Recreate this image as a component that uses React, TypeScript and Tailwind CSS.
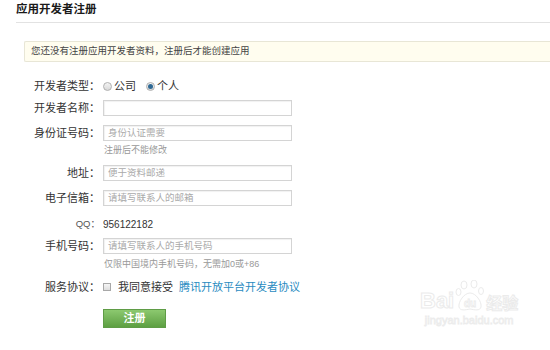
import React from 'react';

const font = { fontFamily: '"Liberation Sans", "Noto Sans CJK SC", sans-serif' };

function Label({ children }: { children: React.ReactNode }) {
  return <div className="w-[101px] shrink-0 text-right text-[11px] text-[#333] pr-[1px]">{children}</div>;
}

function Field({ placeholder }: { placeholder?: string }) {
  return (
    <div className="ml-[2px] flex h-4 w-[189px] items-center border border-[#d4d4d4] bg-white pl-[4px] shadow-[inset_1px_1px_1px_rgba(0,0,0,0.06)]">
      <span className="text-[9.5px] text-[#aaa]">{placeholder}</span>
    </div>
  );
}

function Radio({ checked }: { checked?: boolean }) {
  return (
    <span className="flex h-[9px] w-[9px] items-center justify-center rounded-full border border-[#b0b0b0] bg-gradient-to-b from-[#f4f4f4] to-[#d8d8d8]">
      {checked && <span className="h-[5px] w-[5px] rounded-full bg-[#2f6994]" />}
    </span>
  );
}

export default function App() {
  return (
    <div className="relative h-[350px] w-[550px] overflow-hidden bg-white" style={font}>
      {/* title */}
      <div className="ml-[16px] flex h-[23px] items-center border-b border-[#e2e2e2] pb-[3px]">
        <span className="text-[11.5px] font-bold text-[#1a1a1a]">应用开发者注册</span>
      </div>

      {/* notice */}
      <div className="ml-[24px] mt-[18px] flex h-[21px] items-center rounded-l-[2px] border border-r-0 border-[#e8e6d6] bg-[#fffdef] pl-[6px]">
        <span className="text-[9.5px] text-[#444]">您还没有注册应用开发者资料，注册后才能创建应用</span>
      </div>

      <div className="flex flex-col">
        <div className="mt-[16px] flex h-4 items-center">
          <Label>开发者类型：</Label>
          <div className="ml-[2px] flex items-center text-[11px] text-[#333]">
            <Radio />
            <span className="ml-[2px]">公司</span>
            <span className="ml-[10px]"><Radio checked /></span>
            <span className="ml-[2px]">个人</span>
          </div>
        </div>

        <div className="mt-[6px] flex h-4 items-center">
          <Label>开发者名称：</Label>
          <Field />
        </div>

        <div className="mt-[9px] flex h-4 items-center">
          <Label>身份证号码：</Label>
          <Field placeholder="身份认证需要" />
        </div>

        <div className="mt-[2px] flex h-4 items-center">
          <div className="w-[104px] shrink-0" />
          <span className="text-[9px] text-[#999]">注册后不能修改</span>
        </div>

        <div className="mt-[6px] flex h-4 items-center">
          <Label>地址：</Label>
          <Field placeholder="便于资料邮递" />
        </div>

        <div className="mt-[9px] flex h-4 items-center">
          <Label>电子信箱：</Label>
          <Field placeholder="请填写联系人的邮箱" />
        </div>

        <div className="mt-[10px] flex h-4 items-center">
          <div className="w-[101px] shrink-0 pr-[1px] text-right text-[9.5px] text-[#555]">QQ：</div>
          <span className="ml-[2px] text-[10px] text-[#333]">956122182</span>
        </div>

        <div className="mt-[6px] flex h-4 items-center">
          <Label>手机号码：</Label>
          <Field placeholder="请填写联系人的手机号码" />
        </div>

        <div className="mt-[3px] flex h-4 items-center">
          <div className="w-[104px] shrink-0" />
          <span className="text-[9px] text-[#999]">仅限中国境内手机号码，无需加0或+86</span>
        </div>

        <div className="mt-[6px] flex h-4 items-center">
          <Label>服务协议：</Label>
          <span className="ml-[2px] h-[8px] w-[8px] border border-[#a8a8a8] bg-gradient-to-b from-[#f6f6f6] to-[#dedede]" />
          <span className="ml-[7px] text-[11px] text-[#333]">我同意接受</span>
          <span className="ml-[6px] text-[11px] text-[#2a8bc1]">腾讯开放平台开发者协议</span>
        </div>

        <div className="mt-[14px] flex">
          <div className="w-[103px] shrink-0" />
          <button className="flex h-[19px] w-[63px] items-center justify-center border border-[#5f9c46] bg-gradient-to-b from-[#8cc96f] to-[#5d9f42] text-[11px] font-bold text-white">
            注册
          </button>
        </div>
      </div>

      {/* watermark */}
      <div className="pointer-events-none absolute left-[420px] top-[280px] flex flex-col items-center">
        <div className="flex items-end">
          <span className="text-[22px] font-bold leading-none text-white [-webkit-text-stroke:1px_#ebebeb]">Bai</span>
          <svg width="30" height="32" viewBox="0 0 30 32" className="mx-[1px]">
            <g fill="none" stroke="#ebebeb" strokeWidth="1">
              <ellipse cx="9" cy="5" rx="3" ry="4" />
              <ellipse cx="19" cy="4" rx="3" ry="4" />
              <ellipse cx="3.5" cy="12" rx="2.5" ry="3.5" />
              <ellipse cx="26" cy="11" rx="2.5" ry="3.5" />
              <path d="M15 13 C9 13 3 22 4 27 C5 31 10 30 15 29 C20 30 25 31 26 27 C27 22 21 13 15 13 Z" />
            </g>
            <text x="15" y="27" textAnchor="middle" fontSize="10" fontWeight="bold" fill="white" stroke="#ebebeb" strokeWidth="0.8" fontFamily="Liberation Sans, sans-serif">du</text>
          </svg>
          <span className="text-[16px] font-bold leading-none text-white [-webkit-text-stroke:1px_#ebebeb]">经验</span>
        </div>
        <span className="mt-[3px] text-[11px] leading-none text-white [-webkit-text-stroke:0.8px_#ececec]">jingyan.baidu.com</span>
      </div>
    </div>
  );
}
